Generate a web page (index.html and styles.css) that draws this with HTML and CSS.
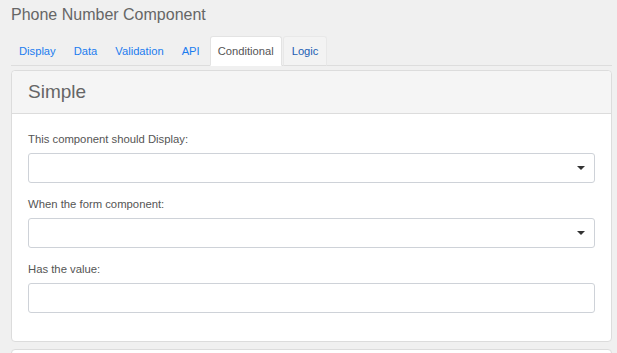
FILE: index.html
```html
<!DOCTYPE html>
<html>
<head>
<meta charset="utf-8">
<link rel="stylesheet" href="styles.css">
</head>
<body>
<div class="page">
  <h1 class="title">Phone Number Component</h1>
  <ul class="tabs">
    <li class="tab">Display</li>
    <li class="tab">Data</li>
    <li class="tab">Validation</li>
    <li class="tab">API</li>
    <li class="tab active">Conditional</li>
    <li class="tab hover">Logic</li>
  </ul>
  <div class="panel">
    <div class="panel-head">Simple</div>
    <div class="panel-body">
      <div class="group">
        <label class="label">This component should Display:</label>
        <div class="control select"><span class="caret"></span></div>
      </div>
      <div class="group">
        <label class="label">When the form component:</label>
        <div class="control select"><span class="caret"></span></div>
      </div>
      <div class="group">
        <label class="label">Has the value:</label>
        <div class="control"></div>
      </div>
    </div>
  </div>
  <div class="panel next"></div>
</div>
</body>
</html>
```

FILE: styles.css
```css
html, body {
  margin: 0;
  padding: 0;
  background: #f0f0f0;
  font-family: "Liberation Sans", Arial, sans-serif;
  overflow: hidden;
}
.page {
  padding: 0 5px 0 11px;
}
.title {
  margin: 5px 0 11px 0;
  font-size: 16px;
  line-height: 20px;
  font-weight: normal;
  color: #666;
}
.tabs {
  list-style: none;
  margin: 0 0 4px 0;
  padding: 0;
  display: flex;
  border-bottom: 1px solid #dddddd;
}
.tab {
  font-size: 11.2px;
  line-height: 16px;
  padding: 6px 7px;
  border: 1px solid transparent;
  border-radius: 3px 3px 0 0;
  margin-bottom: -1px;
  margin-right: 2px;
  color: #1b7cef;
}
.tab.active {
  background: #ffffff;
  border-color: #e3e3e3 #e3e3e3 #ffffff;
  color: #555;
  margin-right: 1px;
}
.tab.hover {
  background: #f3f3f3;
  border-color: #e8e8e8 #e8e8e8 #dddddd;
  color: #1c5fb3;
  padding: 6px 8px;
}
.panel {
  background: #ffffff;
  border: 1px solid #dcdcdc;
  border-radius: 4px;
}
.panel-head {
  background: #f5f5f5;
  border-bottom: 1px solid #dcdcdc;
  border-radius: 4px 4px 0 0;
  padding: 10px 16px;
  font-size: 19px;
  line-height: 22px;
  color: #666;
}
.panel-body {
  padding: 17px 16px 15px 16px;
}
.group {
  margin-bottom: 13px;
}
.label {
  display: block;
  font-size: 11.3px;
  line-height: 16px;
  color: #555;
  margin-bottom: 6px;
}
.control {
  height: 28px;
  border: 1px solid #ced2d8;
  border-radius: 3px;
  background: #fff;
  display: flex;
  align-items: center;
  justify-content: flex-end;
  padding-right: 9px;
}
.caret {
  width: 0;
  height: 0;
  border-left: 4px solid transparent;
  border-right: 4px solid transparent;
  border-top: 4px solid #333;
}
.panel.next {
  margin-top: 7px;
  height: 20px;
}
```
